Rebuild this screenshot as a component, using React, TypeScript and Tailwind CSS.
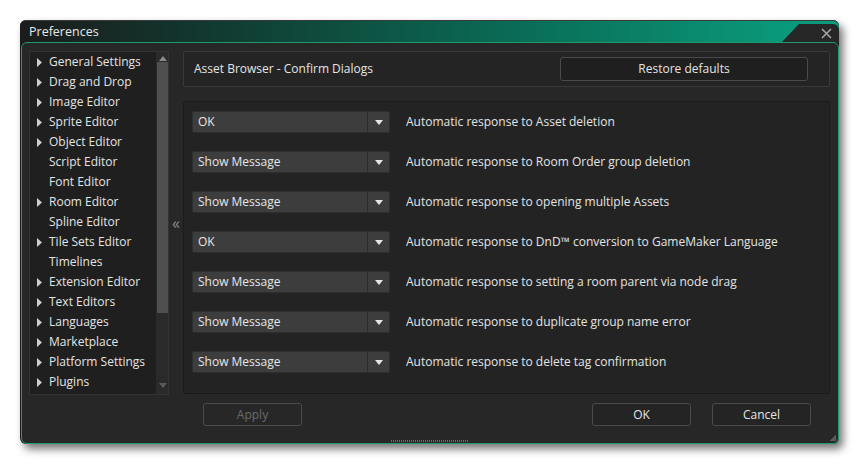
import React from "react";

const treeItems: [string, boolean][] = [
  ["General Settings", true],
  ["Drag and Drop", true],
  ["Image Editor", true],
  ["Sprite Editor", true],
  ["Object Editor", true],
  ["Script Editor", false],
  ["Font Editor", false],
  ["Room Editor", true],
  ["Spline Editor", false],
  ["Tile Sets Editor", true],
  ["Timelines", false],
  ["Extension Editor", true],
  ["Text Editors", true],
  ["Languages", true],
  ["Marketplace", true],
  ["Platform Settings", true],
  ["Plugins", true],
];

const rows: [string, string][] = [
  ["OK", "Automatic response to Asset deletion"],
  ["Show Message", "Automatic response to Room Order group deletion"],
  ["Show Message", "Automatic response to opening multiple Assets"],
  ["OK", "Automatic response to DnD™ conversion to GameMaker Language"],
  ["Show Message", "Automatic response to setting a room parent via node drag"],
  ["Show Message", "Automatic response to duplicate group name error"],
  ["Show Message", "Automatic response to delete tag confirmation"],
];

function Dropdown({ value }: { value: string }) {
  return (
    <div className="flex h-[22px] w-[198px] rounded-[2px] border border-[#2e2e2e] bg-[#3d3d3d]">
      <div className="flex flex-1 items-center pl-[5px] text-[#e6e6e6]">{value}</div>
      <div className="flex w-[22px] items-center justify-center border-l border-[#2a2a2a]">
        <svg width="8" height="5" viewBox="0 0 8 5">
          <path d="M0 0H8L4 5Z" fill="#e6e6e6" />
        </svg>
      </div>
    </div>
  );
}

export default function App() {
  return (
    <div
      className="h-[464px] w-[860px] bg-white pl-[20px] pt-[20px] text-[12px] leading-none"
      style={{ fontFamily: '"Open Sans", "Noto Sans", sans-serif' }}
    >
      <div className="flex h-[424px] w-[819px] flex-col rounded-[6px] bg-[#1c1c1c] shadow-[4px_5px_8px_rgba(0,0,0,0.55)]">
        {/* Title bar */}
        <div className="relative flex h-[22px] items-center rounded-t-[6px] border-t border-[#3a3a3a] bg-[linear-gradient(90deg,#1c1c1c_0%,#12352d_20%,#0a6b55_60%,#0a9b7c_95%)] pl-[9px] pt-[1px] text-[12.5px] text-[#e8e8e8]">
          Preferences
          <div className="absolute right-0 top-[3px] flex h-[19px] w-[58px] items-center justify-end rounded-tr-[6px] bg-[#272727] pr-[7px] [clip-path:polygon(18px_0,100%_0,100%_100%,0_100%)]">
            <svg width="11" height="11" viewBox="0 0 11 11">
              <path d="M1 1L10 10M10 1L1 10" stroke="#a8a8a8" strokeWidth="1.5" />
            </svg>
          </div>
        </div>

        {/* Body */}
        <div className="relative ml-[1px] flex flex-1 flex-col rounded-[6px] border border-[#1f9a6b] bg-[#272727] pl-[7px] pr-[7px] pt-[8px]">
          <div className="flex h-[344px]">
            {/* Tree */}
            <div className="flex w-[140px] border border-[#333333] bg-[#1f1f1f]">
              <div className="flex flex-1 flex-col">
                {treeItems.map(([label, arrow]) => (
                  <div key={label} className="flex h-[20px] items-center text-[#e4e4e4]">
                    <div className="flex w-[19px] justify-end pr-[7px]">
                      {arrow && (
                        <svg width="5" height="9" viewBox="0 0 5 9">
                          <path d="M0 0L5 4.5L0 9Z" fill="#cfcfcf" />
                        </svg>
                      )}
                    </div>
                    {label}
                  </div>
                ))}
              </div>
              <div className="flex w-[12px] flex-col border-l border-[#2a2a2a] bg-[#2a2a2a]">
                <div className="flex h-[9px] items-end justify-center">
                  <svg width="8" height="5" viewBox="0 0 8 5">
                    <path d="M0 5H8L4 0Z" fill="#8a8a8a" />
                  </svg>
                </div>
                <div className="mt-[1px] h-[251px] bg-[#4f4f4f]" />
                <div className="flex-1" />
                <div className="flex h-[11px] items-start justify-center">
                  <svg width="8" height="5" viewBox="0 0 8 5">
                    <path d="M0 0H8L4 5Z" fill="#5a5a5a" />
                  </svg>
                </div>
              </div>
            </div>

            {/* Collapse gutter */}
            <div className="flex w-[14px] items-center justify-center pb-[1px] text-[16px] text-[#8a8a8a]">«</div>

            {/* Right column */}
            <div className="flex w-[647px] flex-col">
              <div className="flex h-[36px] items-center justify-between rounded-[2px] border border-[#3a3a3a] bg-[#242424] pl-[10px] pr-[21px] text-[#e4e4e4]">
                <span>Asset Browser - Confirm Dialogs</span>
                <div className="flex h-[24px] w-[248px] items-center justify-center rounded-[3px] border border-[#4a4a4a] bg-[#1f1f1f]">
                  Restore defaults
                </div>
              </div>
              <div className="mt-[14px] flex h-[293px] flex-col rounded-[2px] border border-[#1b1b1b] bg-[#232323] pl-[8px]">
                {rows.map(([value, text], i) => (
                  <div key={i} className="flex h-[40px] items-center gap-[16px] text-[#e4e4e4]">
                    <Dropdown value={value} />
                    <span>{text}</span>
                  </div>
                ))}
              </div>
            </div>
          </div>

          {/* Buttons */}
          <div className="mt-[8px] flex">
            <div className="ml-[174px] flex h-[23px] w-[99px] items-center justify-center rounded-[3px] border border-[#4a4a4a] text-[#6a6a6a]">
              Apply
            </div>
            <div className="flex-1" />
            <div className="flex h-[23px] w-[99px] items-center justify-center rounded-[3px] border border-[#4a4a4a] bg-[#242424] text-[#e4e4e4]">
              OK
            </div>
            <div className="ml-[21px] mr-[20px] flex h-[23px] w-[99px] items-center justify-center rounded-[3px] border border-[#4a4a4a] bg-[#242424] text-[#e4e4e4]">
              Cancel
            </div>
          </div>

          {/* Resize grips */}
          <div className="absolute bottom-[1px] left-[369px] h-[2px] w-[77px] bg-[repeating-linear-gradient(90deg,#6a6a6a_0_1px,transparent_1px_2px)]" />
          <div className="absolute bottom-[2px] right-[2px] h-[6px] w-[6px] bg-[linear-gradient(135deg,transparent_50%,#5a5a5a_50%)]" />
        </div>
      </div>
    </div>
  );
}
